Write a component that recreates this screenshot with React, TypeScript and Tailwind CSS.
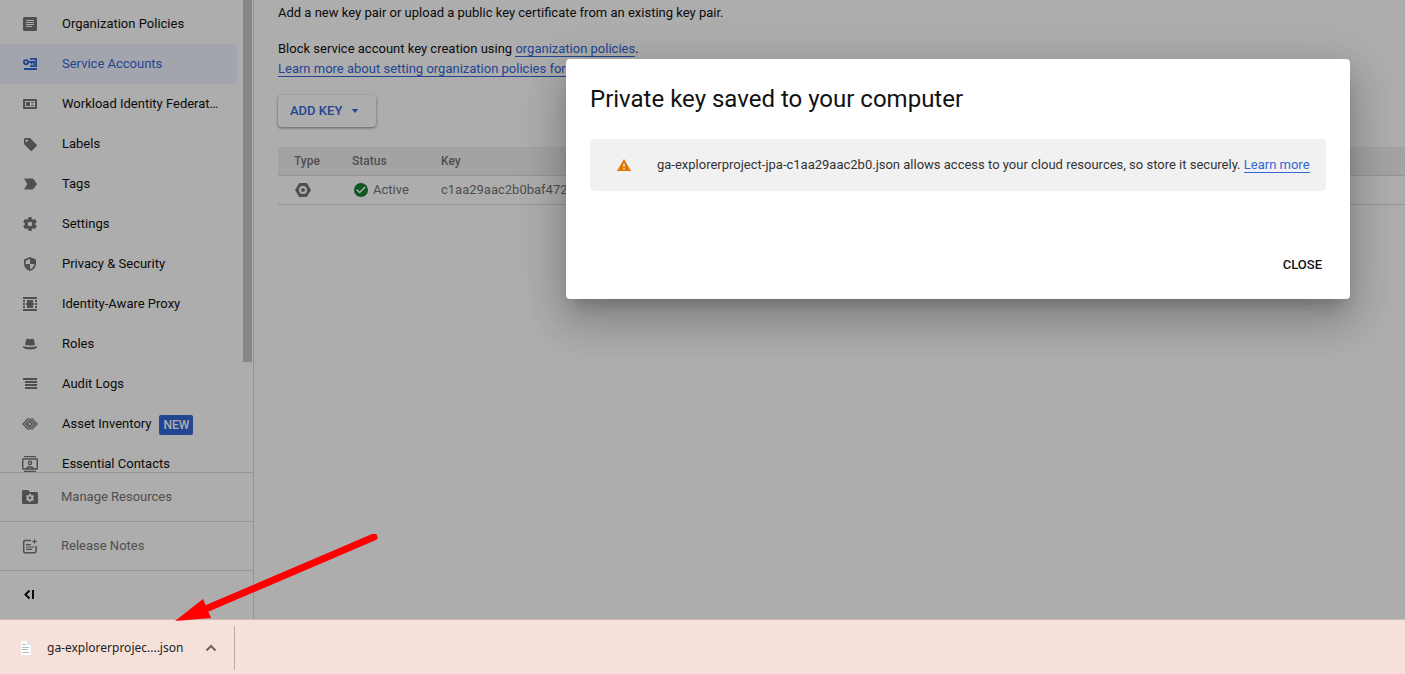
import { useState } from 'react';
import type { ReactNode } from 'react';

// ─── Icons ────────────────────────────────────────────────────────────────────

function Icon({ children }: { children: ReactNode }) {
  return (
    <svg viewBox="0 0 16 16" fill="currentColor" fillRule="evenodd" className="h-4 w-4 shrink-0" aria-hidden="true">
      {children}
    </svg>
  );
}

const icons = {
  policies: (
    <path d="M2.500 1h11A1.500 1.500 0 0 1 15 2.500v11a1.500 1.500 0 0 1-1.500 1.500h-11A1.500 1.500 0 0 1 1 13.500v-11A1.500 1.500 0 0 1 2.500 1zM4 4v1h8V4zM4 6v1h8V6zM4 8v1h8V8zM4 10v1h6v-1z" />
  ),
  serviceAccounts: (
    <>
      <path d="M4 3.200a3 3 0 1 1 0 6 3 3 0 0 1 0-6zm0 1.900a1.100 1.100 0 1 0 0 2.200 1.100 1.100 0 0 0 0-2.200z" />
      <path d="M6.500 5H13v2h-.300v2H11V7h-.800v1.500H9V7H6.500z" />
      <path d="M8 2h7v9H8V9.200h5.200V3.800H8zM2 12h13v2H2z" />
    </>
  ),
  workload: (
    <path d="M2 3h12a1 1 0 0 1 1 1v8a1 1 0 0 1-1 1H2a1 1 0 0 1-1-1V4a1 1 0 0 1 1-1zm1 2v6h10V5zm1 1h4v4H4zm5 0h3v1H9zm0 3h3v1H9z" />
  ),
  labels: (
    <path d="M3.200 2h4.300c.400 0 .700.100 1 .400l6 6a1.300 1.300 0 0 1 0 1.900l-4.200 4.200a1.300 1.300 0 0 1-1.900 0l-6-6A1.400 1.400 0 0 1 2 7.500V3.200C2 2.500 2.500 2 3.200 2zm1.500 1.500a1.200 1.200 0 1 0 0 2.400 1.200 1.200 0 0 0 0-2.400z" />
  ),
  tags: <path d="M2 2.500h8.300c.500 0 1 .200 1.300.700L15 8l-3.400 4.800c-.300.500-.800.700-1.300.700H2L5.200 8z" />,
  settings: (
    <path d="M6.500 1h3l.400 2 1.200.700 1.900-.700 1.800 3-1.600 1.200v1.600l1.600 1.200-1.800 3-1.900-.700-1.200.700-.400 2h-3l-.400-2-1.200-.700-1.900.700-1.800-3 1.600-1.200V7.200L1.200 6 3 3l1.900.700L6.100 3zM8 5.700a2.300 2.300 0 1 0 0 4.600 2.300 2.300 0 0 0 0-4.600z" />
  ),
  privacy: (
    <path d="M8 1 2 3.500v4c0 3.600 2.600 6.700 6 7.500 3.400-.800 6-3.900 6-7.500v-4zm0 2v5h4.300c-.300 2.500-2 4.500-4.300 5.200V8H3.700V4.700z" />
  ),
  proxy: (
    <path d="M1 1h14v2H1zM1 13h14v2H1zM5 4h6v3h1v2h-1v3H5V9H4V7h1zM1 4h2v2H1zM1 7h2v2H1zM1 10h2v2H1zM13 4h2v2h-2zM13 7h2v2h-2zM13 10h2v2h-2z" />
  ),
  roles: (
    <path d="M3 8.800 4 4c.300-1.200 1.400-1.500 2.400-1.200L8 3.300l1.600-.500c1-.300 2.100 0 2.400 1.200l1 4.800c-2.500 1.200-7.500 1.200-10 0zM1 10c3 1.300 11 1.300 14 0v1.500c-1.500 2.500-12.500 2.500-14 0z" />
  ),
  audit: <path d="M1 2h14v2H1zM3 5h12v2H3zM3 8h12v2H3zM3 11h12v2H3z" />,
  asset: (
    <g fill="none" stroke="currentColor" strokeWidth="1.200">
      <path d="M6.500 2.200.900 8l5.600 5.800M9.500 2.200 15.100 8l-5.600 5.800" />
      <path d="M8 3.200 3.400 8 8 12.800 12.600 8zM8 5.700 5.800 8 8 10.300 10.200 8z" />
    </g>
  ),
  contacts: (
    <path d="M2 0h12v1.200H2zM2 14.800h12V16H2zM1.300 2.300h13.400c.700 0 1.300.600 1.300 1.300v8.800c0 .700-.600 1.300-1.300 1.300H1.300C.600 13.700 0 13.100 0 12.400V3.600c0-.700.600-1.300 1.300-1.300zm.200 1.500v8.400h2.300C4.700 10.700 6.200 10 8 10s3.300.700 4.200 2.200h2.300V3.800zM8 4.600a2.300 2.300 0 1 1 0 4.600 2.300 2.300 0 0 1 0-4.600zM8 6a.900.900 0 1 0 0 1.800A.900.900 0 0 0 8 6zM5.800 12.200h4.400c-1.200-.900-3.200-.900-4.400 0z" />
  ),
  resources: (
    <path d="M1.500 1H6l2 2h6.500A1.500 1.500 0 0 1 16 4.500v9a1.500 1.500 0 0 1-1.500 1.500h-13A1.500 1.500 0 0 1 0 13.500v-11A1.500 1.500 0 0 1 1.500 1zM7.200 4.800 7 6l-.900.500L5 6.100 4 7.700l.900.800v.900L4 10.200l1 1.600 1.100-.400.900.500.200 1.200h1.700l.200-1.200.900-.500 1.100.400 1-1.600-.900-.800v-.900l.900-.800-1-1.600-1.100.400L9.100 6l-.200-1.200zM8 7.600a1.350 1.350 0 1 1 0 2.700 1.350 1.350 0 0 1 0-2.700z" />
  ),
  notes: (
    <>
      <path d="M9 2.500H3A1.300 1.300 0 0 0 1.700 3.800v9.700A1.300 1.300 0 0 0 3 14.800h9.700a1.300 1.300 0 0 0 1.300-1.300V8" fill="none" stroke="currentColor" strokeWidth="1.500" />
      <path d="M4 6h5v1.200H4zM4 8.400h8v1.200H4zM4 10.800h6V12H4zM12.500.500l.800 2.200 2.200.800-2.200.800-.800 2.200-.800-2.200-2.200-.800 2.200-.800z" />
    </>
  ),
};

// ─── Sidebar ──────────────────────────────────────────────────────────────────

interface NavItem {
  label: string;
  icon: ReactNode;
  active?: boolean;
  isNew?: boolean;
}

const navItems: NavItem[] = [
  { label: 'Organization Policies', icon: icons.policies },
  { label: 'Service Accounts', icon: icons.serviceAccounts, active: true },
  { label: 'Workload Identity Federat…', icon: icons.workload },
  { label: 'Labels', icon: icons.labels },
  { label: 'Tags', icon: icons.tags },
  { label: 'Settings', icon: icons.settings },
  { label: 'Privacy & Security', icon: icons.privacy },
  { label: 'Identity-Aware Proxy', icon: icons.proxy },
  { label: 'Roles', icon: icons.roles },
  { label: 'Audit Logs', icon: icons.audit },
  { label: 'Asset Inventory', icon: icons.asset, isNew: true },
  { label: 'Essential Contacts', icon: icons.contacts },
];

const footerItems: NavItem[] = [
  { label: 'Manage Resources', icon: icons.resources },
  { label: 'Release Notes', icon: icons.notes },
];

function NavLink({ item }: { item: NavItem }) {
  return (
    <a
      href="#"
      aria-current={item.active ? 'page' : undefined}
      className={`flex h-10 shrink-0 items-center pl-[22px] whitespace-nowrap ${
        item.active ? 'bg-[#f0f4ff] text-[#3367d6]' : 'text-[#111]'
      }`}
    >
      <span className={item.active ? 'text-[#3367d6]' : 'text-[#757575]'}>
        <Icon>{item.icon}</Icon>
      </span>
      <span className="ml-6">{item.label}</span>
      {item.isNew && (
        <span className="mt-0.5 ml-2 rounded-xs bg-[#3367d6] px-1 text-xs leading-5 font-medium text-white">NEW</span>
      )}
    </a>
  );
}

function Sidebar() {
  return (
    <aside className="flex w-[254px] shrink-0 flex-col border-r border-[#dadada]">
      <div className="flex min-h-0 flex-1">
        <nav className="flex min-w-0 flex-1 flex-col overflow-hidden pt-1">
          {navItems.map((item) => <NavLink key={item.label} item={item} />)}
        </nav>
        <div className="ml-1.5 w-2.5 pr-px">
          <div className="h-[362px] bg-[#c8c8c8]" />
        </div>
      </div>
      {footerItems.map((item) => (
        <a
          key={item.label}
          href="#"
          className="flex h-[49px] shrink-0 items-center border-t border-[#dadada] pl-[22px] text-[#757575]"
        >
          <Icon>{item.icon}</Icon>
          <span className="ml-[23px]">{item.label}</span>
        </a>
      ))}
      <div className="flex h-[49px] shrink-0 items-center border-t border-[#dadada] pl-[22px]">
        <button type="button" aria-label="Collapse navigation" className="text-[#111]">
          <Icon>
            <path d="M7.500 3.500 3.500 7.500l4 4" fill="none" stroke="currentColor" strokeWidth="2" />
            <path d="M10 3h2v9h-2z" />
          </Icon>
        </button>
      </div>
    </aside>
  );
}

// ─── Keys page ────────────────────────────────────────────────────────────────

function KeysPage() {
  return (
    <main className="min-w-0 flex-1 overflow-hidden pt-[3px] pl-6 leading-5 text-[#111]">
      <p>Add a new key pair or upload a public key certificate from an existing key pair.</p>
      <p className="mt-4">
        Block service account key creation using{' '}
        <a href="#" className="border-b border-[#3367d6] text-[#3367d6]">organization policies</a>.
      </p>
      <p>
        <a href="#" className="border-b border-[#3367d6] text-[#3367d6]">
          Learn more about setting organization policies for service accounts
        </a>
      </p>
      <button
        type="button"
        className="mt-4 flex h-8 items-center gap-2 rounded-sm pr-4 pl-3 font-medium text-[#3367d6] shadow-[0_1px_3px_rgba(0,0,0,0.45)]"
      >
        ADD KEY
        <svg viewBox="0 0 10 5" fill="currentColor" className="h-1 w-2.5" aria-hidden="true">
          <path d="M1 0h8L5 5z" />
        </svg>
      </button>
      <table className="mt-5 w-full table-fixed border-separate border-spacing-0 text-left text-[#757575]">
        <colgroup>
          <col className="w-[62px]" />
          <col className="w-[89px]" />
          <col />
        </colgroup>
        <thead>
          <tr className="h-[29px] bg-[#f1f1f1] text-xs">
            <th className="border-b border-[#dadada] pl-4 font-medium">Type</th>
            <th className="border-b border-[#dadada] pl-3 font-medium">Status</th>
            <th className="border-b border-[#dadada] pl-3 font-medium">Key</th>
          </tr>
        </thead>
        <tbody>
          <tr className="h-[29px]">
            <td className="border-b border-[#dadada] pl-[17px]">
              <Icon>
                <path d="M4.200 1h7.600L16 8l-4.200 7H4.200L0 8zM8 4a4 4 0 1 0 0 8 4 4 0 0 0 0-8zM8 6a2 2 0 1 1 0 4 2 2 0 0 1 0-4z" />
              </Icon>
            </td>
            <td className="border-b border-[#dadada] pl-[13px]">
              <span className="flex items-center gap-1">
                <span className="text-[#188038]">
                  <Icon>
                    <path d="M8 1a7 7 0 1 0 0 14A7 7 0 0 0 8 1zM6.600 11.600 3.200 8.200l1.100-1.100 2.300 2.300 5-5 1.100 1.100z" />
                  </Icon>
                </span>
                Active
              </span>
            </td>
            <td className="border-b border-[#dadada] pl-3">c1aa29aac2b0baf4727ad4d3a1d7</td>
          </tr>
        </tbody>
      </table>
    </main>
  );
}

// ─── Dialog ───────────────────────────────────────────────────────────────────

function KeySavedDialog({ onClose }: { onClose: () => void }) {
  return (
    <div className="absolute inset-0 flex items-start justify-end bg-black/32 pt-[59px] pr-[55px]">
      <div
        role="dialog"
        aria-modal="true"
        aria-labelledby="key-saved-title"
        className="w-[784px] rounded-sm bg-white px-6 pt-6 pb-4 shadow-[0_11px_15px_-7px_rgba(0,0,0,0.2),0_24px_38px_3px_rgba(0,0,0,0.14),0_9px_46px_8px_rgba(0,0,0,0.12)]"
      >
        <h2 id="key-saved-title" className="text-2xl leading-8 text-[#111]">
          Private key saved to your computer
        </h2>
        <div className="mt-6 flex h-[52px] items-center rounded-sm bg-[#f1f1f1] pr-4 pl-[26px] text-[#333]">
          <span className="text-[#e37400]">
            <Icon>
              <path d="M8 2 1 14h14zM7.300 6.500h1.400v3.500H7.300zm0 4.500h1.400v1.500H7.300z" />
            </Icon>
          </span>
          <p className="ml-[25px]">
            ga-explorerproject-jpa-c1aa29aac2b0.json allows access to your cloud resources, so store it securely.{' '}
            <a href="#" className="border-b border-[#3367d6] text-[#3367d6]">Learn more</a>
          </p>
        </div>
        <div className="mt-14 flex justify-end">
          <button type="button" onClick={onClose} className="h-9 px-1 font-medium text-[#111]">CLOSE</button>
        </div>
      </div>
    </div>
  );
}

// ─── Download bar ─────────────────────────────────────────────────────────────

function DownloadBar() {
  return (
    <footer className="flex h-[55px] shrink-0 items-center border-t border-[#cdb9b3] bg-[#f5e1da] pt-0.5 font-['Noto_Sans','Open_Sans',sans-serif] text-xs text-[#222]">
      <div className="flex h-11 w-[235px] items-center border-r border-[#b9aaa5] pl-5">
        <svg viewBox="0 0 12 16" className="h-4 w-3 shrink-0" aria-hidden="true">
          <path d="M1 1h7l3 3v11H1z" fill="#fff" />
          <path d="M8 1v3h3" fill="none" stroke="#c4c8ca" />
          <path d="M2 4.500h4M2 7.500h7M2 9.500h6M2 12.500h7" stroke="#b5bcc0" />
        </svg>
        <a href="#" className="ml-[15px]">ga-explorerprojec....json</a>
        <button type="button" aria-label="Download options" className="mr-[17px] ml-auto text-[#6d6563]">
          <svg viewBox="0 0 12 8" className="h-2 w-3" fill="none" stroke="currentColor" strokeWidth="2" aria-hidden="true">
            <path d="M1.500 6.500 6 2l4.500 4.500" />
          </svg>
        </button>
      </div>
    </footer>
  );
}

// ─── Page ─────────────────────────────────────────────────────────────────────

export default function App() {
  const [open, setOpen] = useState(true);

  return (
    <div className="relative flex h-screen flex-col bg-white font-[Roboto,sans-serif] text-[13px]">
      <div className="relative flex min-h-0 flex-1 overflow-hidden">
        <Sidebar />
        <KeysPage />
        {open && <KeySavedDialog onClose={() => setOpen(false)} />}
      </div>
      <DownloadBar />

      {/* Arrow pointing at the downloaded file */}
      <svg viewBox="0 0 210 96" className="pointer-events-none absolute bottom-11 left-[172px] h-24 w-[210px]" aria-hidden="true">
        <path d="M202 3 36 74" stroke="#f00" strokeWidth="7" strokeLinecap="round" />
        <path d="M3 87 31 65l8 19z" fill="#f00" />
      </svg>
    </div>
  );
}
